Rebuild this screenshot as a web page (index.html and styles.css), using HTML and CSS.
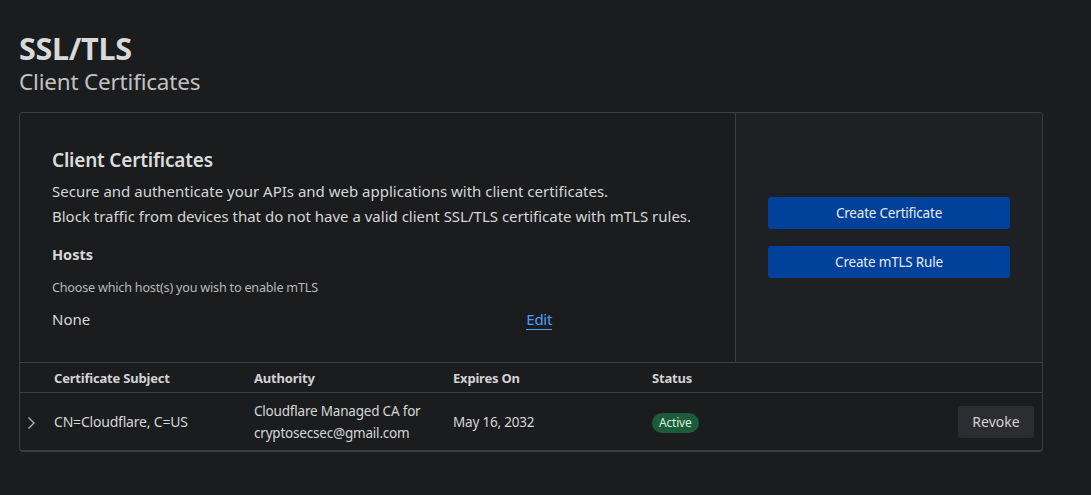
FILE: index.html
```html
<!DOCTYPE html>
<html>
<head>
<meta charset="utf-8">
<link rel="stylesheet" href="styles.css">
</head>
<body>
<header class="page-head">
  <h1 class="title">SSL/TLS</h1>
  <div class="subtitle">Client Certificates</div>
</header>
<section class="card">
  <div class="card-top">
    <div class="intro">
      <h2 class="intro-title">Client Certificates</h2>
      <p class="intro-text">Secure and authenticate your APIs and web applications with client certificates.<br>Block traffic from devices that do not have a valid client SSL/TLS certificate with mTLS rules.</p>
      <h3 class="hosts-title">Hosts</h3>
      <div class="hosts-hint">Choose which host(s) you wish to enable mTLS</div>
      <div class="hosts-row">
        <span class="hosts-value">None</span>
        <a class="edit-link">Edit</a>
      </div>
    </div>
    <div class="actions">
      <button class="btn-primary">Create Certificate</button>
      <button class="btn-primary">Create mTLS Rule</button>
    </div>
  </div>
  <div class="table">
    <div class="row head">
      <span></span>
      <span>Certificate Subject</span>
      <span>Authority</span>
      <span>Expires On</span>
      <span>Status</span>
      <span></span>
    </div>
    <div class="row body">
      <span class="chev"><svg width="9" height="14" viewBox="0 0 9 14"><path d="M1.5 1.5 L7 7 L1.5 12.5" fill="none" stroke="#b5b5b5" stroke-width="1.3"/></svg></span>
      <span class="subject">CN=Cloudflare, C=US</span>
      <span>Cloudflare Managed CA for<br>cryptosecsec@gmail.com</span>
      <span>May 16, 2032</span>
      <span><span class="badge">Active</span></span>
      <span class="cell-end"><button class="btn-secondary">Revoke</button></span>
    </div>
  </div>
</section>
</body>
</html>
```

FILE: styles.css
```css
* { box-sizing: border-box; }
html, body { background: #1b1c1e; }
body {
  margin: 0;
  padding: 29px 48px 0 19px;
  font-family: "Noto Sans", "Open Sans", sans-serif;
  color: #d8d8d8;
}
.page-head { margin-bottom: 15px; }
.title {
  margin: 0;
  font-size: 30.5px;
  line-height: 38px;
  font-weight: 700;
  color: #d9d9d9;
  letter-spacing: -0.3px;
}
.subtitle {
  font-size: 22.5px;
  line-height: 30px;
  color: #c2c2c2;
  letter-spacing: -0.2px;
}
.card {
  width: 1024px;
  border: 1px solid #3b3d40;
  border-bottom-width: 2px;
  border-radius: 4px;
  overflow: hidden;
}
.card-top {
  display: flex;
  border-bottom: 1px solid #3b3d40;
}
.intro {
  flex: 1;
  padding: 34px 32px 32px 32px;
}
.intro-title {
  margin: 0 0 6px;
  font-size: 19px;
  line-height: 26px;
  font-weight: 600;
  color: #dcdcdc;
  letter-spacing: -0.2px;
}
.intro-text {
  margin: 0 0 14px;
  font-size: 15px;
  line-height: 25px;
  color: #d6d6d6;
}
.hosts-title {
  margin: 0 0 13px;
  font-size: 14.5px;
  line-height: 22px;
  font-weight: 700;
  color: #d8d8d8;
}
.hosts-hint {
  font-size: 12.6px;
  line-height: 20px;
  color: #b9b9b9;
  letter-spacing: -0.2px;
  margin-bottom: 10px;
}
.hosts-row {
  display: flex;
  width: 500px;
  justify-content: space-between;
  align-items: center;
  font-size: 15px;
  line-height: 22px;
}
.hosts-value { color: #d8d8d8; }
.edit-link {
  color: #4d9eff;
  border-bottom: 1px solid #4d9eff;
  line-height: 20px;
  letter-spacing: -0.3px;
}
.actions {
  width: 307px;
  background: #1e2123;
  border-left: 1px solid #3b3d40;
  display: flex;
  flex-direction: column;
  justify-content: center;
  align-items: center;
  gap: 17px;
  padding-bottom: 1px;
}
.btn-primary {
  width: 242px;
  height: 32px;
  border: 0;
  border-radius: 3px;
  background: #00429b;
  color: #e8eaf0;
  font-family: inherit;
  font-size: 13.5px;
  letter-spacing: -0.2px;
}
.row {
  display: grid;
  grid-template-columns: 34px 200px 199px 199px 1fr auto;
  align-items: center;
}
.row.head {
  height: 30px;
  border-bottom: 1px solid #3b3d40;
  font-size: 13px;
  font-weight: 700;
  color: #d3d3d3;
  letter-spacing: -0.2px;
}
.row.body {
  height: 57px;
  font-size: 13.5px;
  line-height: 22px;
  color: #d6d6d6;
  letter-spacing: -0.2px;
}
.subject { font-size: 14px; }
.chev { display: flex; justify-content: flex-start; padding-left: 7px; padding-top: 2px; }
.badge {
  display: inline-block;
  background: #1c5c3a;
  color: #d7f0df;
  font-size: 12px;
  line-height: 20px;
  padding: 0 7px;
  border-radius: 10px;
  margin-top: 2px;
}
.cell-end { padding-right: 8px; }
.btn-secondary {
  width: 76px;
  height: 32px;
  border: 0;
  border-radius: 4px;
  background: #2b2d30;
  color: #d3d3d3;
  font-family: inherit;
  font-size: 14px;
}
```
